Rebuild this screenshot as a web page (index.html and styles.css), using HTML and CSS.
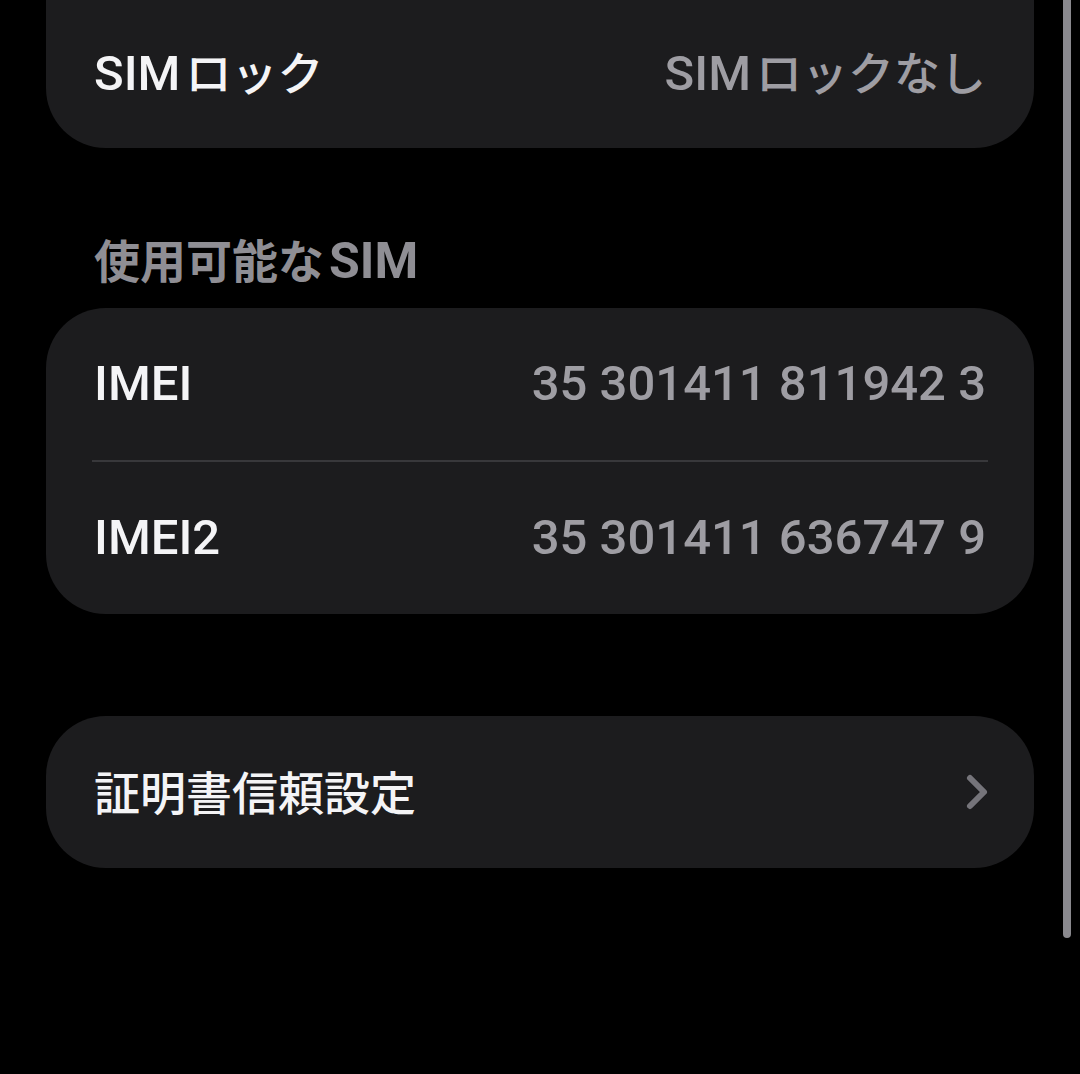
FILE: index.html
```html
<!DOCTYPE html>
<html lang="ja">
<head>
<meta charset="utf-8">
<title>SIM</title>
<link rel="stylesheet" href="styles.css">
</head>
<body>
<div class="screen">
  <div class="card card-top">
    <div class="row">
      <span class="label">SIM<span class="ja gap">ロック</span></span>
      <span class="value">SIM<span class="ja gap">ロックなし</span></span>
    </div>
  </div>

  <div class="section-title"><span class="ja">使用可能な</span><span class="gap">SIM</span></div>

  <div class="card">
    <div class="row">
      <span class="label">IMEI</span>
      <span class="value">35 301411 811942 3</span>
    </div>
    <div class="divider"></div>
    <div class="row">
      <span class="label">IMEI2</span>
      <span class="value">35 301411 636747 9</span>
    </div>
  </div>

  <div class="card card-link">
    <div class="row">
      <span class="label"><span class="ja">証明書信頼設定</span></span>
      <svg class="chevron" width="26" height="38" viewBox="0 0 26 38" aria-hidden="true">
        <polyline points="6,5 20,19 6,33" fill="none" stroke="#75747a" stroke-width="6" stroke-linecap="round" stroke-linejoin="round"/>
      </svg>
    </div>
  </div>

  <div class="scrollbar"></div>
</div>
</body>
</html>
```

FILE: styles.css
```css
html, body {
  margin: 0;
  padding: 0;
  background: #000;
}

body {
  font-family: Roboto, "Noto Sans CJK JP", sans-serif;
  color: #f4f4f6;
  overflow: hidden;
}

.screen {
  position: relative;
  width: 1080px;
  height: 1074px;
  overflow: hidden;
}

.card {
  margin: 0 46px;
  background: #1c1c1e;
  border-radius: 60px;
}

.card-top {
  margin-top: -64px;
  padding-top: 60px;
}

.card-link {
  margin-top: 102px;
}

.row {
  height: 152px;
  padding: 0 48px;
  display: flex;
  align-items: center;
  justify-content: space-between;
  box-sizing: border-box;
}

.label {
  font-size: 49px;
  line-height: 60px;
  font-weight: 500;
  color: #f4f4f6;
  white-space: nowrap;
}

.value {
  font-size: 49px;
  line-height: 60px;
  font-weight: 500;
  color: #9e9da3;
  white-space: nowrap;
}

.ja {
  font-family: "Noto Sans CJK JP", sans-serif;
  font-size: 46px;
}

.gap {
  margin-left: 5px;
}

.divider {
  height: 2px;
  margin: 0 46px;
  background: #38383b;
}

.section-title {
  margin: 82px 0 22px 94px;
  height: 56px;
  line-height: 56px;
  font-size: 50px;
  font-weight: 700;
  color: #8f8e94;
  white-space: nowrap;
}

.section-title .ja {
  font-size: 46px;
}

.chevron {
  margin-right: -4px;
  display: block;
}

.scrollbar {
  position: absolute;
  top: 0;
  right: 9px;
  width: 8px;
  height: 938px;
  border-radius: 0 0 4px 4px;
  background: #8a898e;
}
```
